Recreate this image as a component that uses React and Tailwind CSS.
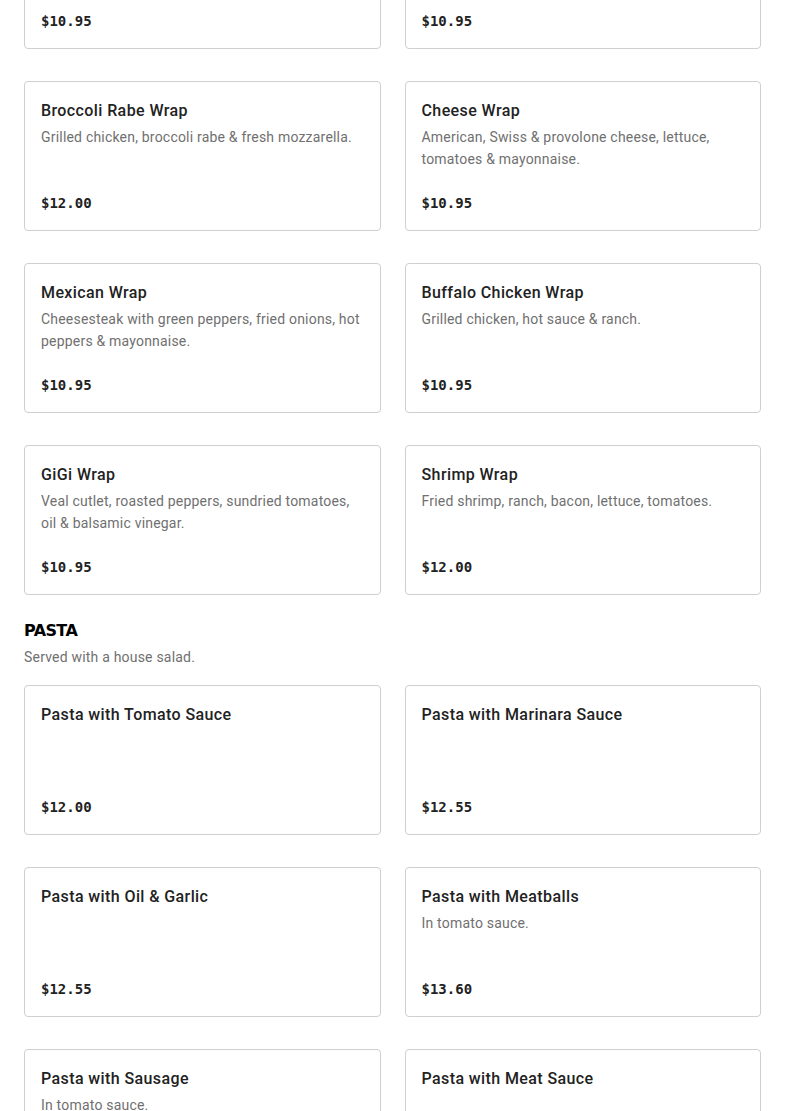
import React from 'react'

const wraps = [
  { name: '', desc: '', price: '$10.95' },
  { name: '', desc: '', price: '$10.95' },
  { name: 'Broccoli Rabe Wrap', desc: 'Grilled chicken, broccoli rabe & fresh mozzarella.', price: '$12.00' },
  { name: 'Cheese Wrap', desc: 'American, Swiss & provolone cheese, lettuce, tomatoes & mayonnaise.', price: '$10.95' },
  { name: 'Mexican Wrap', desc: 'Cheesesteak with green peppers, fried onions, hot peppers & mayonnaise.', price: '$10.95' },
  { name: 'Buffalo Chicken Wrap', desc: 'Grilled chicken, hot sauce & ranch.', price: '$10.95' },
  { name: 'GiGi Wrap', desc: 'Veal cutlet, roasted peppers, sundried tomatoes, oil & balsamic vinegar.', price: '$10.95' },
  { name: 'Shrimp Wrap', desc: 'Fried shrimp, ranch, bacon, lettuce, tomatoes.', price: '$12.00' },
]

const pasta = [
  { name: 'Pasta with Tomato Sauce', desc: '', price: '$12.00' },
  { name: 'Pasta with Marinara Sauce', desc: '', price: '$12.55' },
  { name: 'Pasta with Oil & Garlic', desc: '', price: '$12.55' },
  { name: 'Pasta with Meatballs', desc: 'In tomato sauce.', price: '$13.60' },
  { name: 'Pasta with Sausage', desc: 'In tomato sauce.', price: '$13.60' },
  { name: 'Pasta with Meat Sauce', desc: '', price: '$13.60' },
]

function ItemCard({ item }) {
  return (
    <div className="flex h-[150px] flex-col justify-between rounded border border-[#cfcfcf] bg-white px-4 pt-[17px] pb-[17px]">
      <div>
        {item.name && (
          <h3 className="text-[16px] leading-[24px] font-medium tracking-[0.4px] text-[#222]">{item.name}</h3>
        )}
        {item.desc && (
          <p className="mt-[3px] text-[14px] leading-[22px] tracking-[0.2px] text-[#707070]">{item.desc}</p>
        )}
      </div>
      <div className="font-['DejaVu_Sans_Mono',monospace] text-[14px] leading-[20px] font-bold text-[#222]">
        {item.price}
      </div>
    </div>
  )
}

export default function App() {
  return (
    <div className="min-h-[1111px] overflow-hidden bg-white font-['Roboto',sans-serif]">
      <div className="-mt-[101px] px-6">
        {/* Wraps */}
        <div className="grid grid-cols-2 gap-x-6 gap-y-8">
          {wraps.map((item, i) => (
            <ItemCard key={i} item={item} />
          ))}
        </div>

        {/* Pasta */}
        <div className="mt-[24px] mb-[17px]">
          <h2 className="font-['DejaVu_Sans',sans-serif] text-[16px] leading-[24px] font-bold tracking-[-0.6px] text-black">
            PASTA
          </h2>
          <p className="mt-[3px] text-[14px] leading-[22px] tracking-[0.2px] text-[#707070]">Served with a house salad.</p>
        </div>
        <div className="grid grid-cols-2 gap-x-6 gap-y-8">
          {pasta.map((item) => (
            <ItemCard key={item.name} item={item} />
          ))}
        </div>
      </div>
    </div>
  )
}
